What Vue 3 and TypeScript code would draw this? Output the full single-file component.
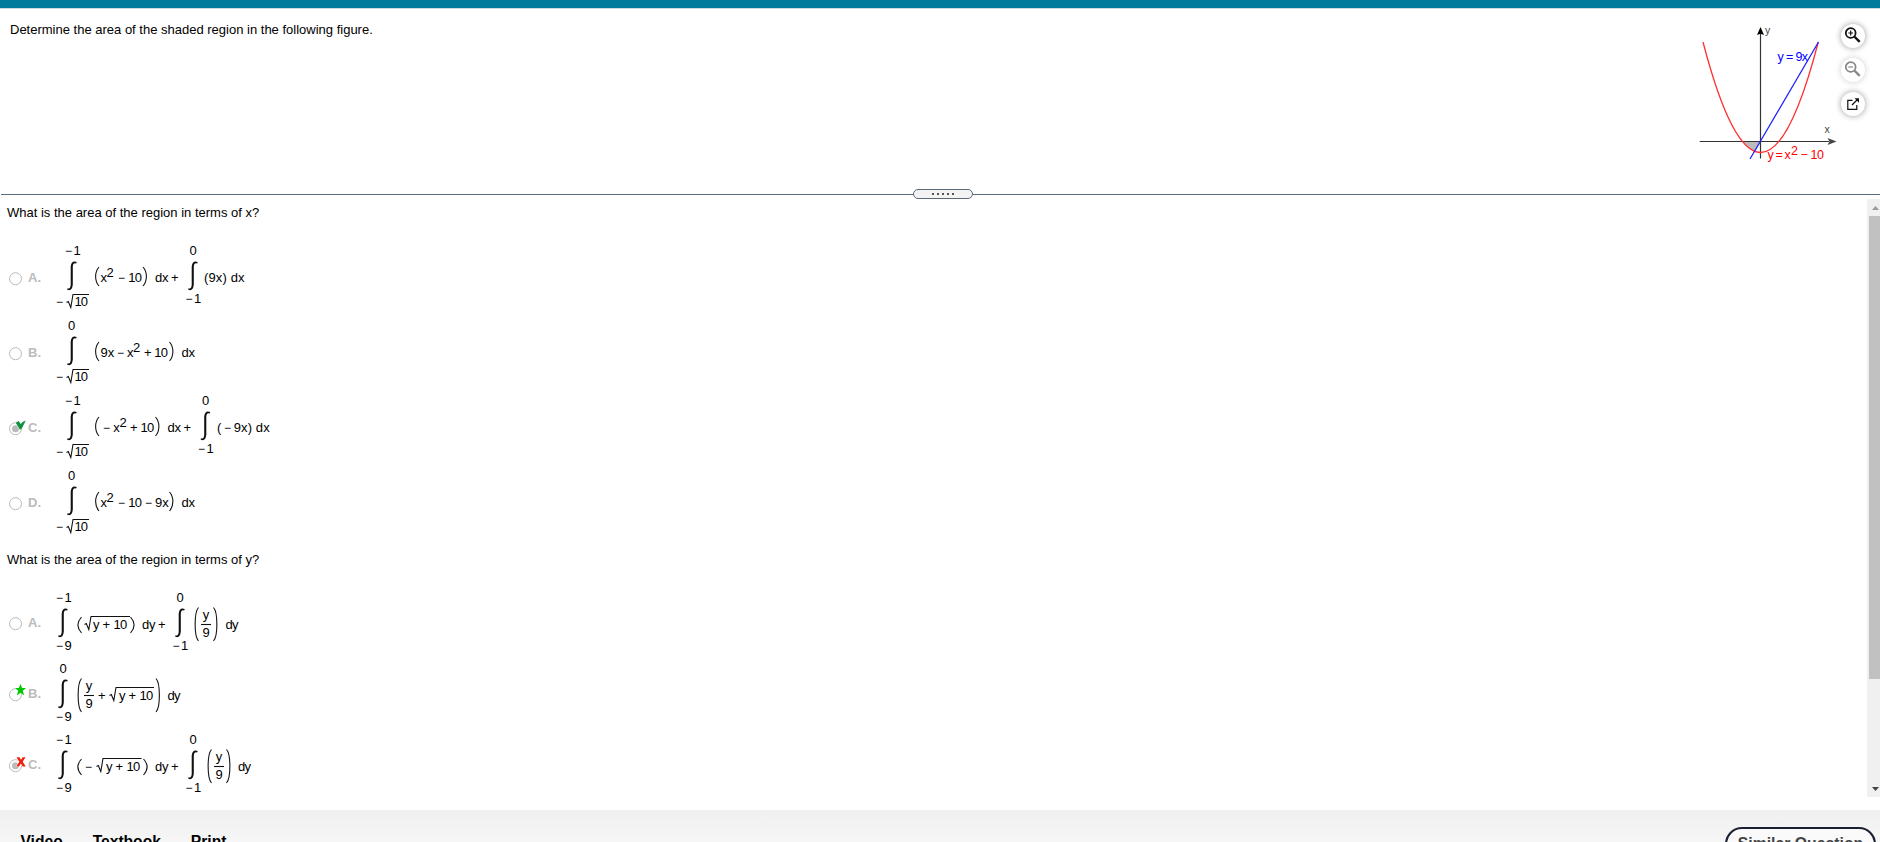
<template>
    <div class="player">
        <div class="topbar"></div>
        <section class="question">
            <p class="prompt">Determine the area of the shaded region in the following figure.</p>
            <svg class="figure" width="143" height="150" viewBox="0 0 143 150">
                <path class="shade" d="M45 123.500Q51.500 131 57 133.500L63 123.500z" />
                <path class="axis" d="M1.700 123.500H131M62.500 15V140.500" />
                <path class="arrow" d="M129.500 120l9 3.500-9 3.500 2-3.500z" />
                <path class="arrow dark" d="M59 17l3.500-8 3.500 8-3.500-1.200z" />
                <path class="curve" d="M5 24Q62.700 245 120.300 24" />
                <path class="line" d="M52 141L120.500 24" />
                <text class="axis-name" x="67" y="16">y</text>
                <text class="axis-name" x="126.500" y="114.500">x</text>
                <text class="line-name" x="79.500" y="43">y</text>
                <text class="line-name" x="88" y="43">=</text>
                <text class="line-name" x="97.500" y="43" textLength="12.500">9x</text>
                <text class="curve-name" x="69.500" y="141">y</text>
                <text class="curve-name" x="77.500" y="141">=</text>
                <text class="curve-name" x="86.500" y="141">x</text>
                <text class="curve-name" x="93" y="136.500">2</text>
                <text class="curve-name" x="102.500" y="141">−</text>
                <text class="curve-name" x="112.500" y="141" textLength="13.500">10</text>
            </svg>
            <div class="tools">
                <button class="tool">
                    <svg width="18" height="18" viewBox="0 0 18 18">
                        <circle cx="6.700" cy="7" r="4.900" />
                        <path d="M10.300 10.500l5.400 5.300" class="handle" />
                        <path d="M4.300 7h4.800M6.700 4.600v4.800" class="sign" />
                    </svg>
                </button>
                <button class="tool off">
                    <svg width="18" height="18" viewBox="0 0 18 18">
                        <circle cx="6.700" cy="7" r="4.900" />
                        <path d="M10.300 10.500l5.400 5.300" class="handle" />
                        <path d="M4.300 7h4.800" class="sign" />
                    </svg>
                </button>
                <button class="tool">
                    <svg width="18" height="18" viewBox="0 0 18 18">
                        <path d="M8.500 6.300H3.800v9h9V11" class="sign" />
                        <path d="M8 11l5-5" class="sign" />
                        <path d="M10.500 4.300H15v4.500z" class="tip" />
                    </svg>
                </button>
            </div>
        </section>
        <div class="divider">
            <span class="grip"><i v-for="n in 5" :key="n"></i></span>
        </div>
        <div class="work">
            <div class="parts">
                <section v-for="part in parts" :key="part.title" :class="['part', part.size]">
                    <p class="title">{{ part.title }}</p>
                    <div v-for="option in part.options" :key="option.name" class="option">
                        <svg class="radio" width="20" height="20" viewBox="0 0 20 20">
                            <circle class="ring" cx="8.500" cy="10.700" r="6" />
                            <circle v-if="option.picked" class="dot" cx="8.500" cy="10.700" r="3.500" />
                            <path v-if="option.mark" :class="['mark', option.mark]" :d="marks[option.mark]" />
                        </svg>
                        <span class="name">{{ option.name }}.</span>
                        <svg class="formula" width="240" :height="part.size === 'tall' ? 75 : 71">
                            <template v-for="(item, index) in option.formula" :key="index">
                                <text
                                    v-if="item.kind === 'text'"
                                    :class="{ minus: item.value === '−' }"
                                    :x="item.x"
                                    :y="item.y"
                                    :textLength="item.w"
                                >{{ item.value }}</text>
                                <path v-else :class="item.kind" :d="item.d" />
                            </template>
                        </svg>
                    </div>
                </section>
            </div>
            <div class="scrollbar">
                <svg width="17" height="17"><path class="up" d="M5 11h7l-3.500-4z" /></svg>
                <div class="thumb"></div>
                <svg width="17" height="17"><path class="down" d="M5 7h7l-3.500 4z" /></svg>
            </div>
        </div>
        <footer class="footer">
            <nav class="links">
                <a v-for="link in links" :key="link">{{ link }}</a>
            </nav>
            <button class="similar">Similar Question</button>
        </footer>
    </div>
</template>

<script lang="ts" setup>
interface TextItem {
    kind: "text"
    value: string
    x: number
    y: number
    w?: number
}

interface PathItem {
    kind: "integral" | "stroke"
    d: string
}

type Item = TextItem | PathItem
type Mark = "check" | "star" | "cross"

interface Option {
    name: string
    mark?: Mark
    picked?: boolean
    formula: Item[]
}

interface Part {
    title: string
    size: "tall" | "short"
    options: Option[]
}

const BASE = 42

const text = (value: string, x: number, w?: number, y = BASE): TextItem => ({ kind: "text", value, x, y, w })
const sup = (x: number) => text("2", x, undefined, 37)
const minus = (x: number, y = BASE) => text("−", x, undefined, y - 0.5)
const ten = (x: number, y = BASE) => text("10", x, 13.8, y)
const stroke = (d: string): PathItem => ({ kind: "stroke", d })

const integral = (x: number): PathItem => ({
    kind: "integral",
    d: `M${x} 48.3q2.8 1.2 3.2-3.3V26.5q.8-6.5 6-4.5l-.5 1.5q-3-1.2-3.4 3V44.6q-.6 7-5.6 5.2z`,
})
const root = (x: number, w: number, top: number): PathItem =>
    stroke(`M${x} ${top + 8}l1.8-1 2.5 6L${x + 6.5} ${top}H${x + w}`)
const open = (x: number, top: number, bottom: number): PathItem =>
    stroke(`M${x + 4} ${top}C${x - 0.5} ${top + 5} ${x - 0.5} ${bottom - 5} ${x + 4} ${bottom}`)
const close = (x: number, top: number, bottom: number): PathItem =>
    stroke(`M${x} ${top}C${x + 4.5} ${top + 5} ${x + 4.5} ${bottom - 5} ${x} ${bottom}`)
const negative = (digit: string, x: number, y: number): Item[] => [minus(x, y), text(digit, x + 8.5, undefined, y)]

// lower limit -sqrt(10)
const fromRoot = (upper: "0" | "-1"): Item[] => [
    ...(upper === "0" ? [text("0", 18, 7, 15)] : negative("1", 15, 15)),
    integral(17.5),
    minus(6, 66),
    root(16.5, 22.5, 54.5),
    text("10", 24.5, 13.5, 66),
]
// lower limit -9
const fromNine = (upper: "0" | "-1"): Item[] => [
    ...(upper === "0" ? [text("0", 9.5, 7, 15)] : negative("1", 6, 15)),
    integral(8.5),
    ...negative("9", 6, 63),
]
// from -1 to 0
const fromOne = (x: number): Item[] => [text("0", x + 1, 7, 15), integral(x), ...negative("1", x - 3, 63)]
const fraction = (x: number): Item[] => [
    text("y", x + 1.8, undefined, 32),
    stroke(`M${x} 37.5h10`),
    text("9", x + 1.5, undefined, 50),
]
const yPlusTen = (x: number): Item[] => [text("y", x), text("+", x + 9.5), ten(x + 20.5)]

const marks: Record<Mark, string> = {
    check: "M8.7 4.8l3-1.800 2 3Q15.700 3.200 18.700 2.500q-1 2.500-4.500 9h-1.400z",
    star: "M13.500 0l1.600 4.100h4l-3.300 2.700 1.400 4.700-3.700-2.800-3.700 2.800 1.400-4.700L7.900 4.100h4z",
    cross: "M9.500 2.200h3l1.500 2.500 1.700-2.500h2.800L15.700 6.700l3 4.800h-3l-1.800-3-1.900 3H9.200l3.200-4.800z",
}

const parts: Part[] = [
    {
        title: "What is the area of the region in terms of x?",
        size: "tall",
        options: [
            {
                name: "A",
                formula: [
                    ...fromRoot("-1"),
                    open(45, 27, 46), text("x", 50.5), sup(56.5), minus(68), ten(78.2), close(93, 27, 46),
                    text("dx", 105, 13.5), text("+", 121),
                    ...fromOne(138.5),
                    text("(9x) dx", 154, 40.5),
                ],
            },
            {
                name: "B",
                formula: [
                    ...fromRoot("0"),
                    open(45, 27, 46), text("9x", 50.5), minus(67), text("x", 77), sup(83), text("+", 94), ten(104.3),
                    close(119.5, 27, 46),
                    text("dx", 131.5, 13.5),
                ],
            },
            {
                name: "C",
                mark: "check",
                picked: true,
                formula: [
                    ...fromRoot("-1"),
                    open(45, 27, 46), minus(53), text("x", 63.2), sup(69.5), text("+", 80), ten(90.5),
                    close(105.5, 27, 46),
                    text("dx", 117.5, 13.5), text("+", 133.5),
                    ...fromOne(151),
                    text("(", 167), minus(174), text("9x) dx", 183.7, 36),
                ],
            },
            {
                name: "D",
                formula: [
                    ...fromRoot("0"),
                    open(45, 27, 46), text("x", 50.5), sup(56.5), minus(68), ten(78.2), minus(95), text("9x", 105),
                    close(119.5, 27, 46),
                    text("dx", 131.5, 13.5),
                ],
            },
        ],
    },
    {
        title: "What is the area of the region in terms of y?",
        size: "short",
        options: [
            {
                name: "A",
                formula: [
                    ...fromNine("-1"),
                    open(27.5, 30, 46), root(34.5, 45.5, 29.5), ...yPlusTen(43), close(80.5, 30, 46),
                    text("dy", 92, 13.5), text("+", 108),
                    ...fromOne(125.5),
                    open(144.5, 20.5, 54), ...fraction(151), close(163.5, 20.5, 54),
                    text("dy", 175.5, 13),
                ],
            },
            {
                name: "B",
                mark: "star",
                formula: [
                    ...fromNine("0"),
                    open(27.5, 20.5, 54), ...fraction(34), text("+", 48), root(59.5, 44.5, 29.5), ...yPlusTen(69),
                    close(106, 20.5, 54),
                    text("dy", 117.5, 13),
                ],
            },
            {
                name: "C",
                mark: "cross",
                picked: true,
                formula: [
                    ...fromNine("-1"),
                    open(27.5, 30, 46), minus(35), root(46.5, 45, 29.5), ...yPlusTen(56), close(93.5, 30, 46),
                    text("dy", 105, 13.5), text("+", 121),
                    ...fromOne(138.5),
                    open(157.5, 20.5, 54), ...fraction(164), close(176.5, 20.5, 54),
                    text("dy", 188, 13),
                ],
            },
        ],
    },
]

const links = ["Video", "Textbook", "Print"]
</script>

<style>
body {
    overflow: hidden;
    background: #fff;
}
</style>

<style scoped>
.player {
    display: flex;
    flex-direction: column;
    height: 842px;
    overflow: hidden;
    font-family: "Liberation Sans", Arial, sans-serif;
    font-size: 13px;
    color: #000;
}
p {
    margin: 0;
}
button {
    padding: 0;
    font-family: inherit;
}

.topbar {
    flex: none;
    height: 8px;
    background: #007a9c;
    border-bottom: 1px solid #ccd9e0;
}
.question {
    flex: none;
    display: flex;
    height: 185px;
}
.prompt {
    flex: 1;
    padding: 13px 0 0 10px;
    line-height: 15px;
}
.tools {
    display: flex;
    flex-direction: column;
    gap: 10px;
    width: 39px;
    padding-top: 15px;
}
.tool {
    display: flex;
    align-items: center;
    justify-content: center;
    width: 24px;
    height: 24px;
    border: 0;
    border-radius: 50%;
    background: #fff;
    box-shadow: 0 0 6px rgba(0, 0, 0, 0.4);
}
.tool svg {
    margin-top: -2px;
    fill: none;
    stroke: #111;
}
.tool circle {
    stroke-width: 1.8;
}
.tool .handle {
    stroke-width: 2.4;
}
.tool .sign {
    stroke-width: 1.2;
}
.tool .tip {
    fill: #111;
    stroke: none;
}
.tool.off {
    box-shadow: 0 0 6px rgba(0, 0, 0, 0.2);
}
.tool.off svg {
    stroke: #888;
}

.figure {
    flex: none;
    margin-top: 9px;
    fill: none;
}
.shade {
    fill: #bbb;
}
.axis {
    stroke: #333;
    stroke-width: 1.2;
}
.arrow {
    fill: #444;
}
.arrow.dark {
    fill: #000;
}
.curve {
    stroke: #ff3030;
    stroke-width: 1.3;
}
.line {
    stroke: #2020ff;
    stroke-width: 1.3;
}
.axis-name {
    fill: #444;
    font-size: 10.5px;
}
.line-name {
    fill: #00f;
    font-size: 12.5px;
}
.curve-name {
    fill: #f00;
    font-size: 12.5px;
}

.divider {
    flex: none;
    display: flex;
    align-items: center;
    justify-content: center;
    height: 1px;
    margin-left: 1px;
    background: #5b6b7b;
}
.grip {
    box-sizing: border-box;
    display: flex;
    flex: none;
    align-items: center;
    justify-content: center;
    gap: 3px;
    width: 60px;
    height: 10px;
    margin: 0 0 1px 5px;
    border: 1px solid #5b6b7b;
    border-radius: 5px;
    background: #f3f3f3;
}
.grip i {
    width: 2px;
    height: 2px;
    background: #555;
}

.work {
    flex: none;
    display: flex;
    height: 615px;
}
.parts {
    flex: 1;
}
.title {
    padding-left: 7px;
    line-height: 15px;
}
.tall .title {
    padding-top: 10px;
    padding-bottom: 20px;
}
.short .title {
    padding-top: 12px;
    padding-bottom: 20px;
}
.option {
    display: flex;
    align-items: center;
    padding-left: 7px;
}
.name {
    width: 22px;
    padding-left: 1px;
    font-weight: bold;
    color: #bbb;
}
.formula {
    display: block;
}
.formula text {
    font-size: 13px;
    fill: #000;
}
.formula .minus {
    font-size: 12px;
}
.integral {
    fill: #111;
}
.stroke {
    fill: none;
    stroke: #111;
    stroke-width: 1.1;
}
.radio .ring {
    fill: none;
    stroke: #bbb;
}
.radio .dot {
    fill: #bbb;
}
.radio .mark {
    stroke: #fff;
    stroke-width: 1;
    paint-order: stroke;
}
.check {
    fill: #109040;
}
.star {
    fill: #00c800;
}
.cross {
    fill: #f21d0d;
}

.scrollbar {
    display: flex;
    flex-direction: column;
    width: 13px;
    height: 598px;
    margin-top: 4px;
    background: #f0f0f0;
    overflow: hidden;
}
.scrollbar svg {
    flex: none;
}
.thumb {
    width: 11px;
    height: 463px;
    margin: 0 0 auto 2px;
    background: #c1c1c1;
}
.up {
    fill: #999;
}
.down {
    fill: #444;
}

.footer {
    flex: none;
    display: flex;
    justify-content: space-between;
    height: 60px;
    background: linear-gradient(#f0f0f0, #fbfbfb);
}
.links {
    display: flex;
    gap: 30px;
    padding: 23px 0 0 20.5px;
    font-size: 15.6px;
    font-weight: bold;
    line-height: 18px;
}
.similar {
    box-sizing: border-box;
    width: 151px;
    height: 34px;
    margin: 17px 4px 0 0;
    border: 2px solid #1b2133;
    border-radius: 17px;
    background: #fafafa;
    font-size: 15.8px;
    font-weight: bold;
    color: #444;
}
</style>
